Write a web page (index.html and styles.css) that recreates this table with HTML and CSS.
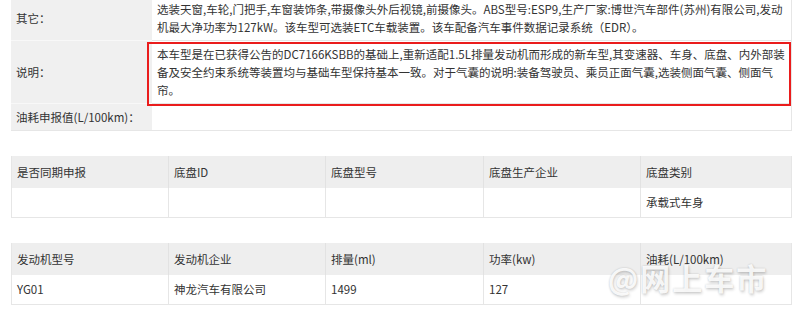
FILE: index.html
```html
<!DOCTYPE html>
<html lang="zh-CN">
<head>
<meta charset="utf-8">
<link rel="stylesheet" href="styles.css">
</head>
<body>
<div class="page">
  <div class="info">
    <div class="label">其它：</div>
    <div class="value">选装天窗,车轮,门把手,车窗装饰条,带摄像头外后视镜,前摄像头。ABS型号:ESP9,生产厂家:博世汽车部件(苏州)有限公司,发动<br>机最大净功率为127kW。该车型可选装ETC车载装置。该车配备汽车事件数据记录系统（EDR）。</div>
    <div class="label">说明：</div>
    <div class="value note">本车型是在已获得公告的DC7166KSBB的基础上,重新适配1.5L排量发动机而形成的新车型,其变速器、车身、底盘、内外部装<br>备及安全约束系统等装置均与基础车型保持基本一致。对于气囊的说明:装备驾驶员、乘员正面气囊,选装侧面气囊、侧面气<br>帘。<span class="mark"></span></div>
    <div class="label">油耗申报值(L/100km)：</div>
    <div class="value"></div>
  </div>

  <div class="grid chassis">
    <div class="th">是否同期申报</div>
    <div class="th">底盘ID</div>
    <div class="th">底盘型号</div>
    <div class="th">底盘生产企业</div>
    <div class="th">底盘类别</div>
    <div class="td"></div>
    <div class="td"></div>
    <div class="td"></div>
    <div class="td"></div>
    <div class="td">承载式车身</div>
  </div>

  <div class="grid engine">
    <div class="th">发动机型号</div>
    <div class="th">发动机企业</div>
    <div class="th">排量(ml)</div>
    <div class="th">功率(kw)</div>
    <div class="th">油耗(L/100km)</div>
    <div class="td">YG01</div>
    <div class="td">神龙汽车有限公司</div>
    <div class="td">1499</div>
    <div class="td">127</div>
    <div class="td"></div>
    <div class="watermark">@网上车市</div>
  </div>
</div>
</body>
</html>
```

FILE: styles.css
```css
html, body {
  margin: 0;
  padding: 0;
  background: #ffffff;
}

body {
  font-family: "Noto Sans CJK SC", "Microsoft YaHei", sans-serif;
  font-size: 11.5px;
  color: #333333;
  overflow: hidden;
  height: 326px;
}

.page {
  width: 781px;
  margin-left: 11px;
  margin-top: -4px;
}

.info {
  display: grid;
  grid-template-columns: 141px 1fr;
  border-right: 1px solid #e6e6e6;
  border-bottom: 1px solid #e6e6e6;
}

.label {
  background: #f0f0f0;
  padding: 0 5px;
  display: flex;
  align-items: center;
  border-top: 1px solid #f8f8f8;
  line-height: 18px;
}

.value {
  padding: 4px 2px 4px 5px;
  line-height: 18px;
  border-top: 1px solid #e6e6e6;
  min-height: 18px;
  white-space: nowrap;
}

.info .label:first-child,
.info .value:nth-child(2) {
  border-top: none;
}

.note {
  position: relative;
}

.mark {
  position: absolute;
  left: -5px;
  top: 1px;
  right: 0;
  bottom: -3px;
  border: 2.5px solid #ea1c1c;
  pointer-events: none;
}

.grid {
  display: grid;
  grid-template-columns: 156px 157px 158px 157px 1fr;
  border: 1px solid #e6e6e6;
  border-top: none;
  position: relative;
}

.chassis {
  margin-top: 25px;
}

.engine {
  margin-top: 25px;
}

.th {
  background: #eeeeee;
  height: 32px;
  line-height: 32px;
  padding-left: 5px;
  border-left: 1px solid #e2e2e2;
}

.td {
  height: 29px;
  line-height: 29px;
  padding-left: 5px;
  border-left: 1px solid #e6e6e6;
}

.grid .th:nth-child(1),
.grid .td:nth-child(6) {
  border-left: none;
}

.watermark {
  position: absolute;
  left: 596px;
  top: 14px;
  font-size: 30px;
  font-weight: 700;
  letter-spacing: 2px;
  color: rgba(255, 255, 255, 0.9);
  text-shadow: 0 0 2px rgba(0, 0, 0, 0.2), 1px 2px 3px rgba(0, 0, 0, 0.16);
  line-height: 40px;
  white-space: nowrap;
  pointer-events: none;
}
```
